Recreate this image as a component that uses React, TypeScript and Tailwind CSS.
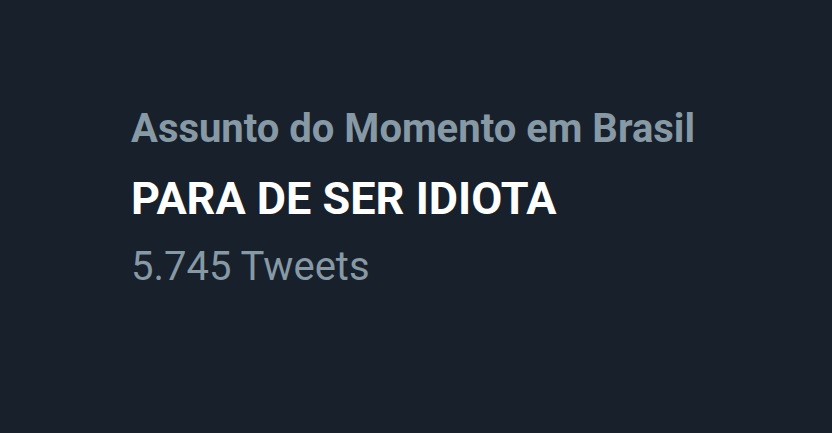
export default function App() {
  return (
    <div className="w-[832px] h-[433px] bg-[#17202b] overflow-hidden" style={{ fontFamily: 'Roboto, "Noto Sans", sans-serif' }}>
      <div className="flex flex-col pl-[131px] pt-[105px]">
        <div className="text-[40px] leading-[48px] font-bold text-[#8899a6]">Assunto do Momento em Brasil</div>
        <div className="mt-[20px] text-[45px] leading-[52px] font-bold text-white">PARA DE SER IDIOTA</div>
        <div className="mt-[18px] text-[40px] leading-[48px] text-[#8899a6]">5.745 Tweets</div>
      </div>
    </div>
  );
}
